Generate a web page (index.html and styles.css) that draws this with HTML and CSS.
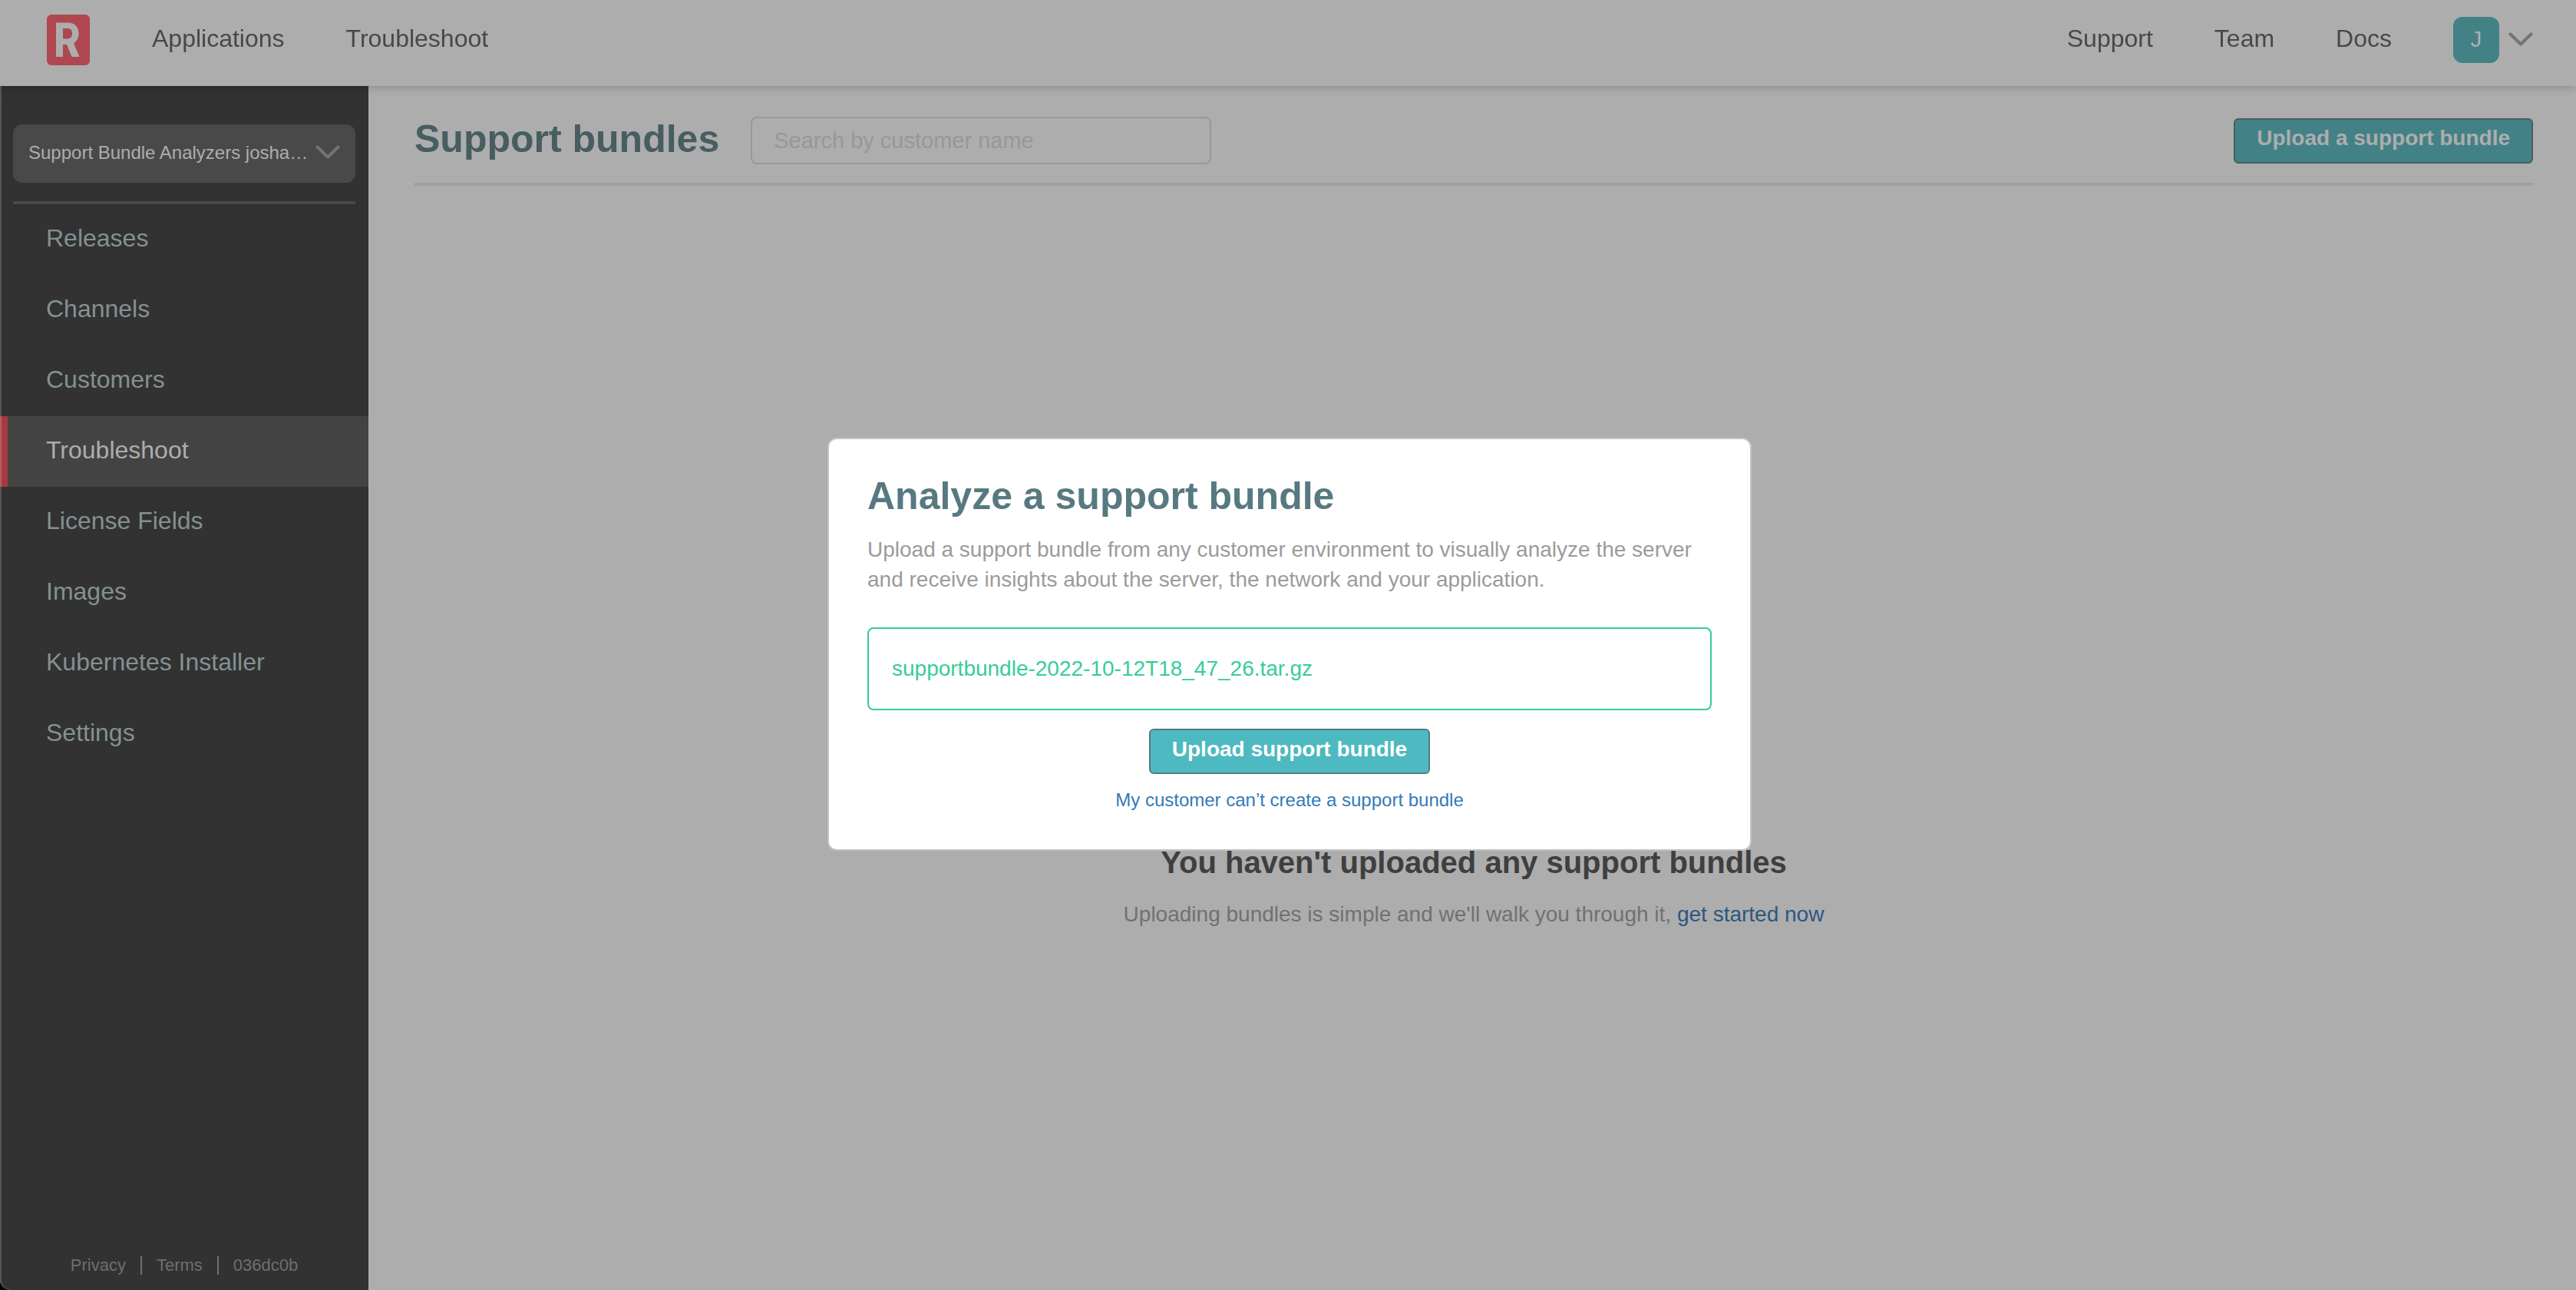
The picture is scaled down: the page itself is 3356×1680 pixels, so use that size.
FILE: index.html
```html
<!DOCTYPE html>
<html lang="en">
<head>
<meta charset="utf-8">
<title>Support bundles</title>
<link rel="stylesheet" href="styles.css">
</head>
<body>
<div class="app">
  <header class="topbar">
    <a class="logo" href="#" aria-label="Home">
      <svg width="56" height="66" viewBox="0 0 56 66" aria-hidden="true">
        <rect width="56" height="66" rx="6" fill="#ae474f"/>
        <path fill="#adadad" fill-rule="evenodd" d="M12 10.500h15c9 0 14.500 5 14.500 14 0 6-2.500 10.500-6.500 13l7.500 17.500h-10l-6.500-16h-5v16h-9zM21 18v13.500h5c5 0 7-2.500 7-7s-2-6.500-7-6.500z"/>
      </svg>
    </a>
    <nav class="topnav">
      <a href="#">Applications</a>
      <a href="#">Troubleshoot</a>
    </nav>
    <nav class="topnav topnav-right">
      <a href="#">Support</a>
      <a href="#">Team</a>
      <a href="#">Docs</a>
      <button class="account" type="button" aria-label="Account menu">
        <span class="avatar">J</span>
        <svg class="chevron" width="32" height="18" viewBox="0 0 32 18" aria-hidden="true"><path d="M2.500 2.500L16 15.500L29.500 2.500"/></svg>
      </button>
    </nav>
  </header>
  <div class="body">
    <aside class="sidebar">
      <button class="app-picker" type="button">
        <span class="app-name">Support Bundle Analyzers josha…</span>
        <svg class="chevron" width="32" height="18" viewBox="0 0 32 18" aria-hidden="true"><path d="M2.500 2.500L16 15.500L29.500 2.500"/></svg>
      </button>
      <nav class="sidenav">
        <a href="#">Releases</a>
        <a href="#">Channels</a>
        <a href="#">Customers</a>
        <a class="active" href="#">Troubleshoot</a>
        <a href="#">License Fields</a>
        <a href="#">Images</a>
        <a href="#">Kubernetes Installer</a>
        <a href="#">Settings</a>
      </nav>
      <footer class="side-footer">
        <a href="#">Privacy</a>
        <a href="#">Terms</a>
        <span>036dc0b</span>
      </footer>
    </aside>
    <main class="content">
      <div class="page-head">
        <h1 class="title">Support bundles</h1>
        <input class="search" type="text" placeholder="Search by customer name" aria-label="Search by customer name">
        <button class="btn btn-dim" type="button">Upload a support bundle</button>
      </div>
      <section class="empty">
        <h2>You haven't uploaded any support bundles</h2>
        <p>Uploading bundles is simple and we'll walk you through it, <a href="#">get started now</a></p>
      </section>
    </main>
  </div>
</div>
<div class="overlay">
  <div class="modal" role="dialog" aria-modal="true" aria-labelledby="modal-title">
    <h2 class="title modal-title" id="modal-title">Analyze a support bundle</h2>
    <p class="modal-text">Upload a support bundle from any customer environment to visually analyze the server and receive insights about the server, the network and your application.</p>
    <div class="file">supportbundle-2022-10-12T18_47_26.tar.gz</div>
    <button class="btn" type="button">Upload support bundle</button>
    <a class="help" href="#">My customer can’t create a support bundle</a>
  </div>
</div>
<div class="window-edge"></div>
</body>
</html>
```
FILE: styles.css
```css
* {
  box-sizing: border-box;
}

body {
  margin: 0;
  background: #000;
  font-family: "Liberation Sans", Arial, Helvetica, sans-serif;
}

h1, h2, p {
  margin: 0;
}

a {
  text-decoration: none;
}

button {
  font-family: inherit;
  cursor: pointer;
}

.app {
  display: flex;
  flex-direction: column;
  min-height: 100vh;
  background: #adadad;
  border-bottom-left-radius: 14px;
  overflow: hidden;
}

.topbar {
  position: relative;
  z-index: 1;
  display: flex;
  align-items: center;
  height: 112px;
  padding: 0 56px 8px 61px;
  background: #adadad;
  box-shadow: 0 0 12px rgba(0, 0, 0, 0.25);
}

.logo {
  display: flex;
}

.topnav {
  display: flex;
  align-items: center;
  gap: 80px;
  margin-left: 81px;
  font-size: 32px;
  line-height: 40px;
}

.topnav-right {
  margin-left: auto;
}

.topnav a {
  padding-bottom: 4px;
  color: #484848;
}

.account {
  display: flex;
  align-items: center;
  gap: 12px;
  padding: 0;
  border: 0;
  background: none;
}

.avatar {
  width: 60px;
  height: 60px;
  border-radius: 12px;
  background: #428286;
  color: #adadad;
  font-size: 30px;
  line-height: 58px;
  text-align: center;
}

.chevron {
  flex: none;
  margin-bottom: 2px;
  fill: none;
  stroke: #737373;
  stroke-width: 4;
  stroke-linecap: round;
  stroke-linejoin: round;
}

.body {
  flex: 1;
  display: flex;
}

.sidebar {
  flex: none;
  display: flex;
  flex-direction: column;
  width: 480px;
  padding-top: 50px;
  background: #323232;
}

.app-picker {
  display: flex;
  align-items: center;
  justify-content: space-between;
  height: 76px;
  margin: 0 17px 24px;
  padding: 0 20px 2px;
  border: 0;
  border-radius: 12px;
  background: #494949;
  color: #adadad;
  font-size: 24px;
}

.sidenav {
  display: flex;
  flex-direction: column;
}

.sidenav::before {
  content: "";
  height: 4px;
  margin: 0 17px;
  background: #494949;
}

.sidenav a {
  height: 92px;
  padding-left: 50px;
  border-left: 10px solid transparent;
  color: #849191;
  font-size: 32px;
  line-height: 88px;
}

.sidenav a.active {
  border-left-color: #a53a41;
  background: #434343;
  color: #adadad;
}

.side-footer {
  display: flex;
  justify-content: center;
  margin-top: auto;
  padding-bottom: 20px;
  font-size: 22px;
  line-height: 24px;
}

.side-footer > * {
  padding: 0 19px;
  color: #6e6e6e;
}

.side-footer > * + * {
  border-left: 2px solid #6e6e6e;
}

.content {
  flex: 1;
  display: flex;
  flex-direction: column;
  padding: 40px 56px 0 60px;
}

.page-head {
  display: flex;
  align-items: center;
  height: 90px;
  padding-bottom: 24px;
  border-bottom: 4px solid #9ba0a4;
}

.title {
  font-size: 50px;
  line-height: 60px;
  color: #475d61;
}

.page-head .title {
  padding-bottom: 4px;
}

.search {
  width: 600px;
  height: 62px;
  margin-left: 41px;
  padding: 0 28px;
  border: 2px solid #999;
  border-radius: 8px;
  background: transparent;
  color: #484848;
  font-family: inherit;
  font-size: 29px;
}

.search::placeholder {
  color: #979898;
  opacity: 1;
}

.btn {
  height: 59px;
  padding: 0 28px 6px;
  border: 2px solid #577981;
  border-radius: 6px;
  background: #4db9c0;
  color: #fff;
  font-size: 28px;
  font-weight: bold;
}

.btn-dim {
  margin-left: auto;
  border-color: #475d61;
  background: #428286;
  color: #adadad;
}

.empty {
  flex: 1;
  display: flex;
  flex-direction: column;
  align-items: center;
  justify-content: center;
  gap: 24px;
  padding-top: 388px;
  color: #3f3f3f;
}

.empty h2 {
  font-size: 40px;
  line-height: 48px;
}

.empty p {
  color: #717171;
  font-size: 28px;
  line-height: 40px;
}

.empty a {
  color: #2b5781;
}

.overlay {
  position: fixed;
  inset: 0;
  display: flex;
  align-items: center;
  justify-content: center;
  padding: 0 0 2px 4px;
}

.modal {
  display: flex;
  flex-direction: column;
  align-items: center;
  width: 1204px;
  padding: 44px 50px 48px;
  border: 2px solid #c0c3c7;
  border-radius: 12px;
  background: #fff;
}

.modal-title {
  align-self: stretch;
  color: #577981;
}

.modal-text {
  align-self: stretch;
  margin: 20px 0 43px;
  color: #9b9b9b;
  font-size: 28px;
  line-height: 39px;
}

.file {
  align-self: stretch;
  padding: 0 30px;
  border: 2px solid #38cc97;
  border-radius: 8px;
  color: #38cc97;
  font-size: 28px;
  line-height: 104px;
}

.modal .btn {
  margin: 24px 0 18px;
}

.help {
  color: #337ab7;
  font-size: 24px;
  line-height: 32px;
}

.window-edge {
  position: fixed;
  inset: 0;
  border-left: 2px solid rgba(255, 255, 255, 0.18);
  border-bottom-left-radius: 14px;
  pointer-events: none;
}
```
